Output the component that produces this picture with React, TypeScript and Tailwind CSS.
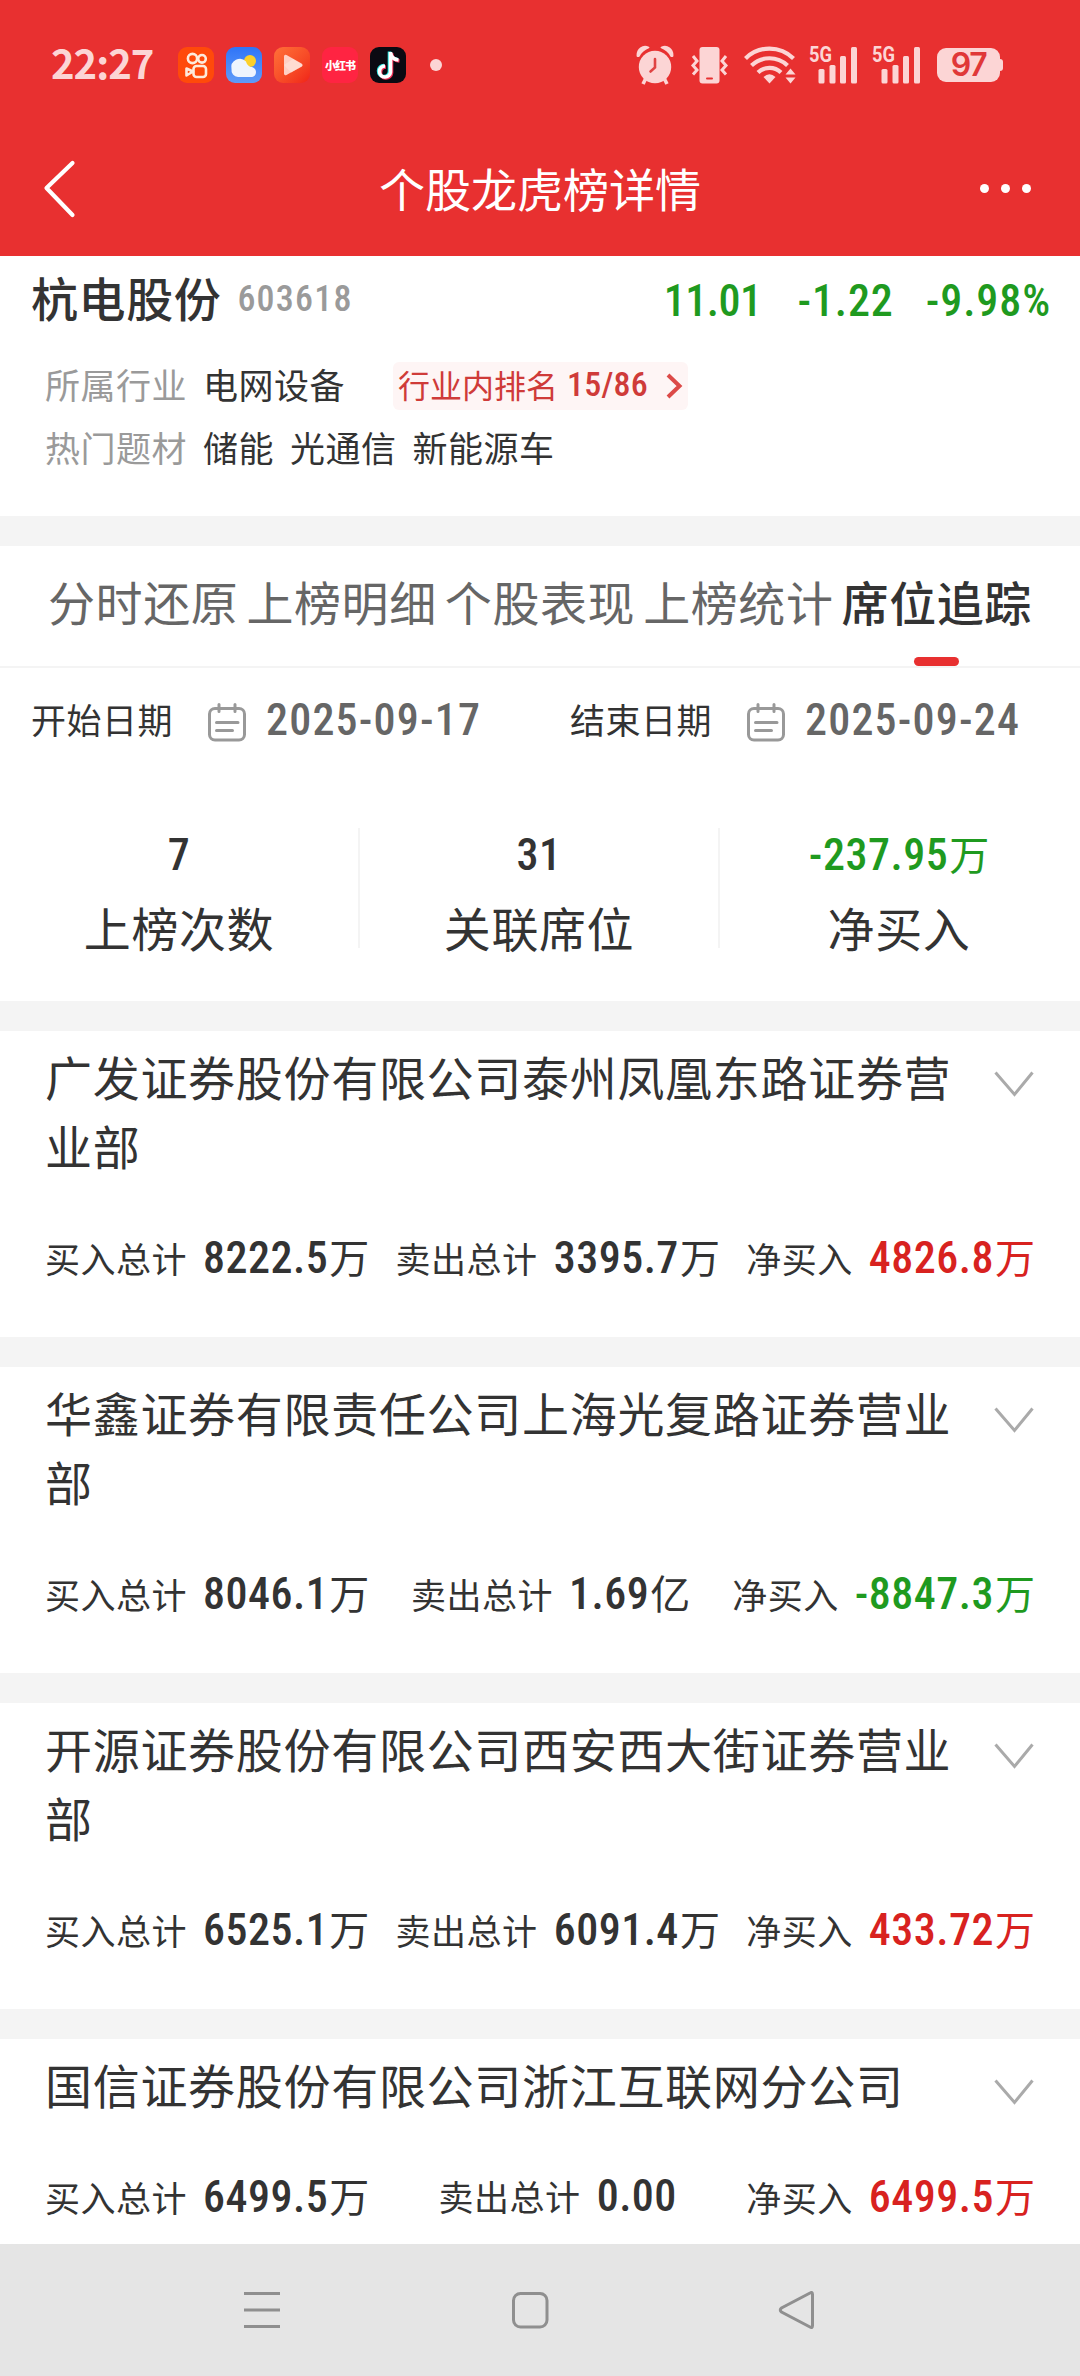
import type { ReactNode } from 'react'
import { clsx } from 'clsx'

type Tone = 'up' | 'down' | 'flat'

type Seat = {
  name: string
  buy: string
  sell: string
  net: string
  tone: Tone
}

const TONE_COLORS: Record<Tone, string> = {
  up: 'text-[#d8221f]',
  down: 'text-[#1f9a1f]',
  flat: 'text-[#333333]',
}

const TABS = ['分时还原', '上榜明细', '个股表现', '上榜统计', '席位追踪']

const STATS: { label: string; value: string; tone: Tone }[] = [
  { label: '上榜次数', value: '7', tone: 'flat' },
  { label: '关联席位', value: '31', tone: 'flat' },
  { label: '净买入', value: '-237.95万', tone: 'down' },
]

const SEATS: Seat[] = [
  {
    name: '广发证券股份有限公司泰州凤凰东路证券营业部',
    buy: '8222.5万',
    sell: '3395.7万',
    net: '4826.8万',
    tone: 'up',
  },
  {
    name: '华鑫证券有限责任公司上海光复路证券营业部',
    buy: '8046.1万',
    sell: '1.69亿',
    net: '-8847.3万',
    tone: 'down',
  },
  {
    name: '开源证券股份有限公司西安西大街证券营业部',
    buy: '6525.1万',
    sell: '6091.4万',
    net: '433.72万',
    tone: 'up',
  },
  {
    name: '国信证券股份有限公司浙江互联网分公司',
    buy: '6499.5万',
    sell: '0.00',
    net: '6499.5万',
    tone: 'up',
  },
]

// digits in a narrow face, the unit (万 / 亿) in the CJK face
function Amount({ value, tone = 'flat' }: { value: string; tone?: Tone }) {
  const unit = /[万亿]$/.test(value) ? value.slice(-1) : ''
  const digits = unit ? value.slice(0, -1) : value
  return (
    <span className={clsx('whitespace-nowrap', TONE_COLORS[tone])}>
      <span className="font-['Roboto'] text-[44px] font-medium tracking-[0.5px] font-stretch-[75%]">{digits}</span>
      {unit && <span className="ml-px text-[40px]">{unit}</span>}
    </span>
  )
}

function AppIcon({ className, children }: { className: string; children: ReactNode }) {
  return (
    <div className={clsx('size-9 overflow-hidden rounded-[9px]', className)}>{children}</div>
  )
}

function Signal() {
  return (
    <svg className="overflow-visible" width="49" height="38" viewBox="0 0 49 38" fill="#fcd5d5">
      <text x="0" y="15.5" fontSize="22" fontWeight="700" fontFamily="Roboto" textLength="23" lengthAdjust="spacingAndGlyphs">
        5G
      </text>
      <rect x="9.5" y="23" width="6" height="14.5" rx="1.5" />
      <rect x="20.5" y="19" width="6" height="18.5" rx="1.5" />
      <rect x="31" y="10" width="6" height="27.5" rx="1.5" />
      <rect x="42" y="1" width="6" height="36.5" rx="1.5" />
    </svg>
  )
}

function StatusBar() {
  return (
    <div className="flex h-[124px] items-center pt-[6px] pr-[77px] pl-[51px]">
      <span className="w-[127px] pb-[7px] text-[40px] leading-[40px] font-bold tracking-[-1px] text-[#fcd5d5]">22:27</span>
      <div className="flex gap-3">
        <AppIcon className="bg-[#ff4a0a]">
          <svg width="36" height="36" viewBox="0 0 36 36" fill="none" stroke="#fdeadb" strokeWidth="2.6">
            <circle cx="14.5" cy="11.5" r="4.6" />
            <circle cx="24" cy="11.8" r="3.8" />
            <rect x="15.5" y="19" width="12.5" height="11" rx="3" />
            <path d="M15 24.5l-6.5-3v7z" strokeLinejoin="round" />
          </svg>
        </AppIcon>
        <AppIcon className="bg-linear-to-b from-[#2f74f8] to-[#5f9bf8]">
          <svg width="36" height="36" viewBox="0 0 36 36">
            <circle cx="24" cy="14" r="6" fill="#fcd02b" />
            <path d="M12 30a7 7 0 0 1-6.500-8A8.500 8.500 0 0 1 20 14.500a8 8 0 0 0 4.500 5.500c3 0 5.500 2 5.500 5s-2 5-5 5z" fill="#eef4fd" />
          </svg>
        </AppIcon>
        <AppIcon className="bg-linear-to-br from-[#ff7038] to-[#f02018]">
          <svg width="36" height="36" viewBox="0 0 36 36">
            <path d="M10 9.500q0-2.500 2.500-1.500l15 8.500q2 1.500 0 3l-15 8.500q-2.500 1-2.500-1.500z" fill="#ffd0c4" />
            <path d="M10 18l9-6 9 5.500q1 1 0 2l-11 6z" fill="#ffe4dc" opacity=".6" />
          </svg>
        </AppIcon>
        <AppIcon className="flex items-center justify-center bg-[#ff2442]">
          <span className="text-[11px] leading-none font-black tracking-[-1px] whitespace-nowrap text-white">小红书</span>
        </AppIcon>
        <AppIcon className="bg-[#0b0a12]">
          <svg width="36" height="36" viewBox="0 0 36 36" fill="none" strokeWidth="3.600">
            <path d="M19.500 4.500v20a5.500 5.500 0 1 1-5.500-6M19.500 5c.5 4 3.500 7 8 7.500" stroke="#2be5e0" />
            <path d="M21.500 6v20a5.500 5.500 0 1 1-5.500-6M21.500 6.500c.5 4 3.500 7 8 7.500" stroke="#f43058" />
            <path d="M20.500 5v20a5.500 5.500 0 1 1-5.500-6M20.500 5.500c.5 4 3.500 7 8 7.500" stroke="#ffffff" />
          </svg>
        </AppIcon>
      </div>
      <div className="ml-6 size-3 rounded-full bg-[#fcd5d5]" />

      <div className="ml-auto flex items-center">
        <svg width="38" height="40" viewBox="0 0 38 40" fill="#fcd5d5">
          <circle cx="19" cy="22" r="16.2" />
          <path d="M1.500 11C1 4 7 0 12.500 2.500Q6 5 2.800 11zM36.500 11C37 4 31 0 25.500 2.500Q32 5 35.200 11z" stroke="#fcd5d5" strokeWidth="1.800" strokeLinejoin="round" />
          <path d="M9.500 34l-2.500 5M28.500 34l2.500 5" stroke="#fcd5d5" strokeWidth="3.600" />
          <path d="M19 14v8.500l-4.500 4" fill="none" stroke="#e04444" strokeWidth="2.600" strokeLinecap="round" />
        </svg>
        <svg className="ml-4" width="39" height="38" viewBox="0 0 39 38" fill="#fcd5d5">
          <rect x="9.500" y="1" width="20" height="36.500" rx="3" />
          <rect x="16" y="31.500" width="7" height="2" rx="1" fill="#e83030" />
          <path d="M3 10l4 5-4 4.500 4 4.500-4 4.500M36 10l-4 5 4 4.500-4 4.500 4 4.500" fill="none" stroke="#fcd5d5" strokeWidth="3" />
        </svg>
        <svg className="ml-[15px]" width="52" height="38" viewBox="0 0 52 38" fill="none" stroke="#fcd5d5" strokeWidth="4.200">
          <path d="M1.500 12.500a34 34 0 0 1 48 0" />
          <path d="M7.500 19.500a26 26 0 0 1 36 0" />
          <path d="M14 26.500a16.500 16.500 0 0 1 23 0" />
          <path d="M19.500 31q6-5.500 12 0l-6 6.500z" fill="#fcd5d5" stroke="none" />
          <path d="M41.500 28.500l5-6 5 6zM41.500 31.500l5 6 5-6z" fill="#fcd5d5" stroke="none" />
        </svg>
        <div className="ml-[13px] flex gap-[14px]">
          <Signal />
          <Signal />
        </div>
        <div className="ml-4 flex h-[34px] w-[63px] items-center justify-center rounded-[9px] bg-[#fcd5d5] font-['Inter'] text-[32px] font-semibold tracking-[-1.500px] text-[#e03838]">
          97
        </div>
        <div className="h-3 w-[3px] rounded-r-sm bg-[#fcd5d5]" />
      </div>
    </div>
  )
}

function TitleBar() {
  return (
    <div className="flex h-[128px] items-center justify-between px-[43px]">
      <svg width="62" height="60" viewBox="0 0 62 60" fill="none" stroke="#ffffff" strokeWidth="4.200" strokeLinecap="round" strokeLinejoin="round">
        <path d="M29.500 5L3.500 30l26 27" />
      </svg>
      <h1 className="pb-[3px] text-[46px] leading-[60px] text-white">个股龙虎榜详情</h1>
      <div className="flex w-[62px] justify-end gap-3 pr-[6px]">
        <span className="size-[9px] shrink-0 rounded-full bg-white" />
        <span className="size-[9px] shrink-0 rounded-full bg-white" />
        <span className="size-[9px] shrink-0 rounded-full bg-white" />
      </div>
    </div>
  )
}

function StockSummary() {
  return (
    <section className="h-[260px]">
      <div className="flex h-[82px] items-center pr-[29px] pl-[31px]">
        <h2 className="text-[47px] leading-[60px] font-medium tracking-[0.6px]">杭电股份</h2>
        <span className="ml-4 pt-[3px] font-['Roboto'] text-[36px] font-medium tracking-[1.2px] text-[#9a9a9a] font-stretch-[75%]">603618</span>
        <div className="ml-auto flex pt-[7px] font-['Roboto'] text-[44px] leading-[50px] font-medium tracking-[0.900px] text-[#1f9a1f] font-stretch-[75%]">
          <span className="mr-[36px] tracking-[-0.500px]">11.01</span>
          <span className="mr-[32px]">-1.22</span>
          <span>-9.98%</span>
        </div>
      </div>
      <div className="flex h-[92px] items-center pl-[45px] text-[35px] leading-[48px] tracking-[0.500px]">
        <span className="mr-4 text-[#9a9a9a]">所属行业</span>
        <span>电网设备</span>
        <span className="mt-[3px] ml-[48px] flex h-12 w-[295px] items-center rounded-md bg-[#fef5f5] pl-[5px] text-[32px] tracking-normal whitespace-nowrap text-[#cf3b39]">
          <span className="pb-[3px]">行业内排名</span>
          <span className="ml-[9px] pb-[3px] font-['Roboto'] text-[34px] font-medium tracking-[0.200px] font-stretch-[75%]">15/86</span>
          <svg className="ml-[18px]" width="17" height="26" viewBox="0 0 17 26" fill="none" stroke="#dc4a48" strokeWidth="4">
            <path d="M2 2l11.500 11L2 24" />
          </svg>
        </span>
      </div>
      <div className="flex h-[33px] items-center pl-[45px] text-[35px] leading-[33px] tracking-[0.500px]">
        <span className="mr-4 text-[#9a9a9a]">热门题材</span>
        <div className="flex gap-4">
          <span>储能</span>
          <span>光通信</span>
          <span>新能源车</span>
        </div>
      </div>
    </section>
  )
}

function Tabs() {
  return (
    <nav className="flex h-[122px] justify-between border-b-2 border-[#f4f4f4] pr-[48px] pl-[48px]">
      {TABS.map((tab) => {
        const active = tab === '席位追踪'
        return (
          <div
            key={tab}
            className={clsx(
              'flex flex-col items-center justify-between pt-[23px] text-[47px] leading-[64px] tracking-[0.600px]',
              active ? 'font-medium' : 'text-[#666666]',
            )}
          >
            {tab}
            {active && <span className="h-[9px] w-[45px] rounded-full bg-[#e83030]" />}
          </div>
        )
      })}
    </nav>
  )
}

function DateField({ label, date }: { label: string; date: string }) {
  return (
    <div className="flex w-[539px] items-center pl-[31px]">
      <span className="pb-[5px] text-[35px] tracking-[0.500px]">{label}</span>
      <svg className="ml-[34px]" width="40" height="40" viewBox="0 0 40 40" fill="none" stroke="#999999" strokeWidth="3" strokeLinecap="round">
        <rect x="2.500" y="6.500" width="35" height="31.500" rx="5.500" />
        <path d="M12 2.500v7M28 2.500v7M9.500 20.500h21.500M9.500 28.500h16" />
      </svg>
      <span className="ml-[19px] pb-[4px] font-['Roboto'] text-[44px] font-medium tracking-[1.200px] text-[#666666] font-stretch-[75%]">{date}</span>
    </div>
  )
}

function Stats() {
  return (
    <section className="flex h-[225px] pt-[52px] pr-[2px]">
      {STATS.map((s, i) => (
        <div
          key={s.label}
          className={clsx(
            'flex h-[120px] flex-1 flex-col items-center text-[47px] leading-[56px]',
            i < STATS.length - 1 && 'border-r-2 border-[#f4f4f4]',
          )}
        >
          <div className="-mt-[3px] h-[74px] shrink-0 leading-[50px]">
            <Amount value={s.value} tone={s.tone} />
          </div>
          <div className="tracking-[0.600px]">{s.label}</div>
        </div>
      ))}
    </section>
  )
}

function Total({ label, value, tone }: { label: string; value: string; tone?: Tone }) {
  return (
    <div className="flex items-baseline gap-4">
      <span className="text-[35px] tracking-[0.500px]">{label}</span>
      <Amount value={value} tone={tone} />
    </div>
  )
}

function SeatCard({ seat }: { seat: Seat }) {
  return (
    <article className="border-b-[30px] border-[#f4f4f4] pr-[46px] pb-[40px] pl-[45px] last:border-0">
      <div className="flex justify-between pt-[10px]">
        <h3 className="w-[912px] text-[47px] leading-[69px] tracking-[0.700px]">{seat.name}</h3>
        <svg className="mt-[30px]" width="40" height="26" viewBox="0 0 40 26" fill="none" stroke="#aaaaaa" strokeWidth="3">
          <path d="M1.500 1.500L20.500 23.500 38.500 1.500" />
        </svg>
      </div>
      <div className="mt-[47px] -mr-px mb-px flex h-[70px] items-center justify-between leading-[70px]">
        <Total label="买入总计" value={seat.buy} />
        <Total label="卖出总计" value={seat.sell} />
        <Total label="净买入" value={seat.net} tone={seat.tone} />
      </div>
    </article>
  )
}

function NavigationBar() {
  return (
    <footer className="flex h-[132px] items-center bg-[#e5e5e5] pl-[243px]">
      <svg width="573" height="38" viewBox="0 0 573 38" fill="none" stroke="#8f8f8f" strokeWidth="3">
        <path d="M1 2.500h36M1 19h36M1 35.500h36" />
        <rect x="270.500" y="2.500" width="33.500" height="33.500" rx="7" />
        <path d="M569.500 3.500v31q0 3-2.500 1.500l-28.500-15q-2.500-2 0-4l28.500-15q2.500-1.500 2.500 1.500z" />
      </svg>
    </footer>
  )
}

export default function App() {
  return (
    <div className="flex h-[2376px] w-[1080px] flex-col overflow-hidden bg-white font-['Noto_Sans_CJK_SC',sans-serif] text-[#333333]">
      <header className="h-[256px] shrink-0 bg-[#e83030]">
        <StatusBar />
        <TitleBar />
      </header>
      <main className="h-[1988px] shrink-0 overflow-hidden">
        <StockSummary />
        <div className="h-[30px] bg-[#f4f4f4]" />
        <Tabs />
        <div className="flex h-[108px] items-center">
          <DateField label="开始日期" date="2025-09-17" />
          <DateField label="结束日期" date="2025-09-24" />
        </div>
        <Stats />
        <div className="h-[30px] bg-[#f4f4f4]" />
        {SEATS.map((seat) => (
          <SeatCard key={seat.name} seat={seat} />
        ))}
      </main>
      <NavigationBar />
    </div>
  )
}
